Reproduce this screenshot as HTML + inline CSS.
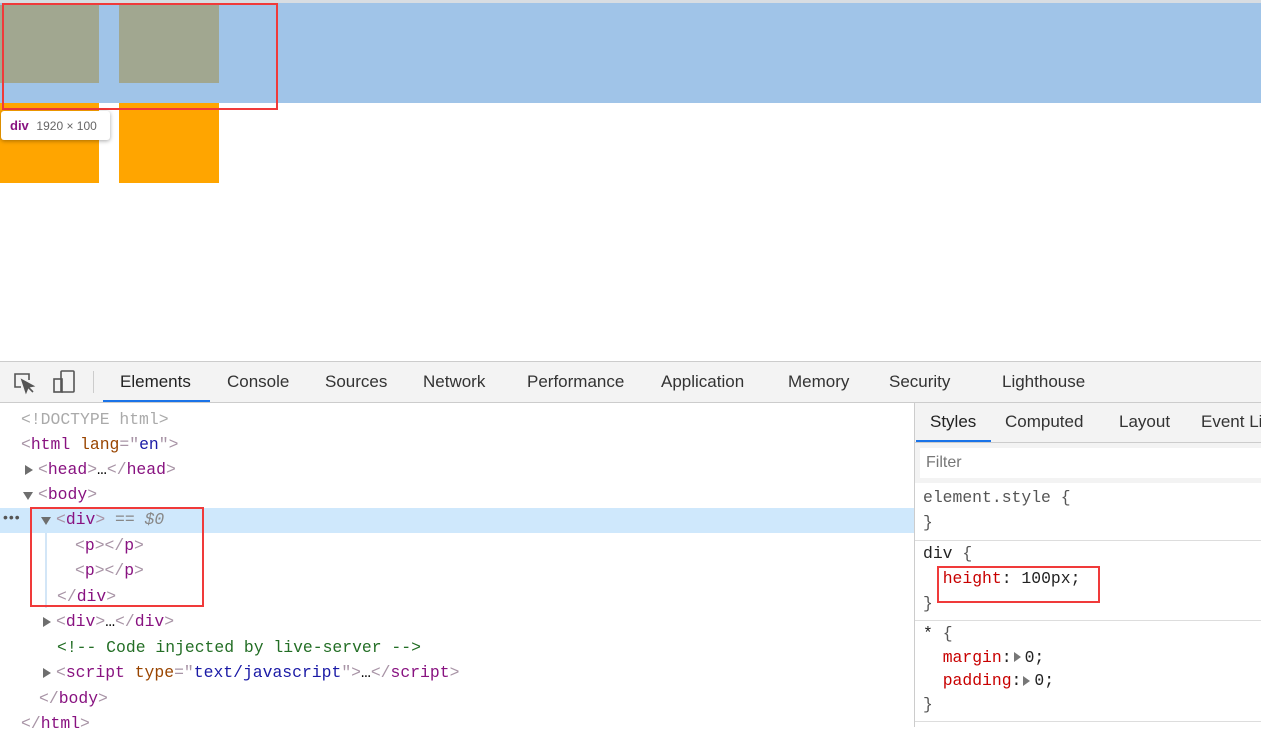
<!DOCTYPE html>
<html><head><style>
*{margin:0;padding:0;box-sizing:border-box}
body{width:1261px;height:727px;position:relative;overflow:hidden;background:#fff;font-family:"Liberation Sans",sans-serif}
.a{position:absolute}
.m{font-family:"Liberation Mono",monospace;font-size:16.4px;white-space:pre;line-height:25px}
.l{position:absolute;font-family:"Liberation Mono",monospace;font-size:16.4px;white-space:pre;line-height:25px;height:25px}
.t{color:#881280}.b{color:#a894a6}.at{color:#994500}.v{color:#1a1aa6}.g{color:#888}.c{color:#236e25}.r{color:#c80000}
.tri{position:absolute;width:0;height:0;border-left:5px solid transparent;border-right:5px solid transparent;border-top:8px solid #6e6e6e}
.trr{position:absolute;width:0;height:0;border-top:5px solid transparent;border-bottom:5px solid transparent;border-left:8px solid #6e6e6e}
.tri2{display:inline-block;width:0;height:0;border-top:5px solid transparent;border-bottom:5px solid transparent;border-left:7px solid #777;vertical-align:middle}
.tab{position:absolute;top:372px;font-size:17px;color:#333;white-space:nowrap}
.st{position:absolute;top:412px;font-size:17px;color:#333;white-space:nowrap}
</style></head><body>
<div class="a" style="left:0;top:0;width:1261px;height:3px;background:#d8dde2"></div>
<div class="a" style="left:0;top:3px;width:1261px;height:100px;background:#a0c4e8"></div>
<div class="a" style="left:0;top:5px;width:99px;height:78px;background:#a1a790"></div>
<div class="a" style="left:119px;top:5px;width:100px;height:78px;background:#a1a790"></div>
<div class="a" style="left:0;top:103px;width:99px;height:80px;background:#ffa500"></div>
<div class="a" style="left:119px;top:103px;width:100px;height:80px;background:#ffa500"></div>
<div class="a" style="left:2px;top:3px;width:276px;height:107px;border:2px solid #f03a3a"></div>
<div class="a" style="left:1px;top:111px;width:109px;height:29px;background:#fff;border-radius:3px;box-shadow:0 1px 4px rgba(0,0,0,.35);font-size:13px;line-height:30px;padding-left:9px"><b style="color:#881280">div</b> <span style="color:#666;font-size:12px;margin-left:4px">1920 × 100</span></div>

<div class="a" style="left:0;top:361px;width:1261px;height:42px;background:#f3f3f3;border-top:1px solid #ccc;border-bottom:1px solid #ccc"></div>
<svg class="a" style="left:13px;top:371px" width="24" height="24" viewBox="0 0 24 24" fill="none" stroke="#555" stroke-width="1.6"><path d="M8 16H2V3h14v6"/><path d="M9 9l4 12 2-5 5-1z" fill="#555"/><path d="M15 16l5 5"/></svg>
<svg class="a" style="left:52px;top:369px" width="24" height="26" viewBox="0 0 24 26" fill="none" stroke="#555" stroke-width="1.6"><rect x="9" y="2" width="13" height="21" rx="1"/><rect x="2" y="10" width="8" height="13"/></svg>
<div class="a" style="left:93px;top:371px;width:1px;height:22px;background:#ccc"></div>
<div class="tab" style="left:120px;color:#222">Elements</div>
<div class="a" style="left:103px;top:400px;width:107px;height:2px;background:#1a73e8"></div>
<div class="tab" style="left:227px">Console</div>
<div class="tab" style="left:325px">Sources</div>
<div class="tab" style="left:423px">Network</div>
<div class="tab" style="left:527px">Performance</div>
<div class="tab" style="left:661px">Application</div>
<div class="tab" style="left:788px">Memory</div>
<div class="tab" style="left:889px">Security</div>
<div class="tab" style="left:1002px">Lighthouse</div>

<div class="a" style="left:0;top:508px;width:914px;height:25px;background:#cfe8fc"></div>
<div class="a" style="left:45px;top:533px;width:2px;height:75px;background:#d3e6f7"></div>
<div class="a" style="left:3px;top:509px;font-size:14px;color:#555;letter-spacing:1px">•••</div>

<div class="l" style="left:21px;top:407px;color:#aaa">&lt;!DOCTYPE html&gt;</div>
<div class="l" style="left:21px;top:432px"><span class="b">&lt;</span><span class="t">html</span> <span class="at">lang</span><span class="b">="</span><span class="v">en</span><span class="b">"&gt;</span></div>
<div class="trr" style="left:25px;top:465px"></div>
<div class="l" style="left:38px;top:457px"><span class="b">&lt;</span><span class="t">head</span><span class="b">&gt;</span>…<span class="b">&lt;/</span><span class="t">head</span><span class="b">&gt;</span></div>
<div class="tri" style="left:23px;top:492px"></div>
<div class="l" style="left:38px;top:482px"><span class="b">&lt;</span><span class="t">body</span><span class="b">&gt;</span></div>
<div class="tri" style="left:41px;top:517px"></div>
<div class="l" style="left:56px;top:507px"><span class="b">&lt;</span><span class="t">div</span><span class="b">&gt;</span> <i class="g">== $0</i></div>
<div class="l" style="left:75px;top:533px"><span class="b">&lt;</span><span class="t">p</span><span class="b">&gt;&lt;/</span><span class="t">p</span><span class="b">&gt;</span></div>
<div class="l" style="left:75px;top:558px"><span class="b">&lt;</span><span class="t">p</span><span class="b">&gt;&lt;/</span><span class="t">p</span><span class="b">&gt;</span></div>
<div class="l" style="left:57px;top:584px"><span class="b">&lt;/</span><span class="t">div</span><span class="b">&gt;</span></div>
<div class="trr" style="left:43px;top:617px"></div>
<div class="l" style="left:56px;top:609px"><span class="b">&lt;</span><span class="t">div</span><span class="b">&gt;</span>…<span class="b">&lt;/</span><span class="t">div</span><span class="b">&gt;</span></div>
<div class="l c" style="left:57px;top:635px">&lt;!-- Code injected by live-server --&gt;</div>
<div class="trr" style="left:43px;top:668px"></div>
<div class="l" style="left:56px;top:660px"><span class="b">&lt;</span><span class="t">script</span> <span class="at">type</span><span class="b">="</span><span class="v">text/javascript</span><span class="b">"&gt;</span>…<span class="b">&lt;/</span><span class="t">script</span><span class="b">&gt;</span></div>
<div class="l" style="left:39px;top:686px"><span class="b">&lt;/</span><span class="t">body</span><span class="b">&gt;</span></div>
<div class="l" style="left:21px;top:711px"><span class="b">&lt;/</span><span class="t">html</span><span class="b">&gt;</span></div>
<div class="a" style="left:30px;top:507px;width:174px;height:100px;border:2px solid #f03a3a"></div>

<div class="a" style="left:914px;top:403px;width:1px;height:324px;background:#ccc"></div>
<div class="a" style="left:915px;top:403px;width:346px;height:40px;background:#f3f3f3;border-bottom:1px solid #ccc"></div>
<div class="st" style="left:930px;color:#222">Styles</div>
<div class="a" style="left:916px;top:440px;width:75px;height:2px;background:#1a73e8"></div>
<div class="st" style="left:1005px">Computed</div>
<div class="st" style="left:1119px">Layout</div>
<div class="st" style="left:1201px">Event Li</div>
<div class="a" style="left:915px;top:443px;width:346px;height:40px;background:#f3f3f3"></div>
<div class="a" style="left:920px;top:448px;width:341px;height:30px;background:#fff;font-size:16px;color:#777;line-height:30px;padding-left:6px">Filter</div>
<div class="a m" style="left:923px;top:485px;color:#555">element.style {
}</div>
<div class="a" style="left:915px;top:540px;width:346px;height:1px;background:#ddd"></div>
<div class="a m" style="left:923px;top:541px;color:#222">div <span style="color:#555">{</span>
  <span class="r">height</span>: 100px;
<span style="color:#555">}</span></div>
<div class="a" style="left:937px;top:566px;width:163px;height:37px;border:2px solid #f03a3a"></div>
<div class="a" style="left:915px;top:620px;width:346px;height:1px;background:#ddd"></div>
<div class="a m" style="left:923px;top:622px;color:#222;line-height:23.5px">* <span style="color:#555">{</span>
  <span class="r">margin</span>:<span class="tri2" style="margin:0 4px 0 2px"></span>0;
  <span class="r">padding</span>:<span class="tri2" style="margin:0 4px 0 2px"></span>0;
<span style="color:#555">}</span></div>
<div class="a" style="left:915px;top:721px;width:346px;height:1px;background:#ddd"></div>
</body></html>
